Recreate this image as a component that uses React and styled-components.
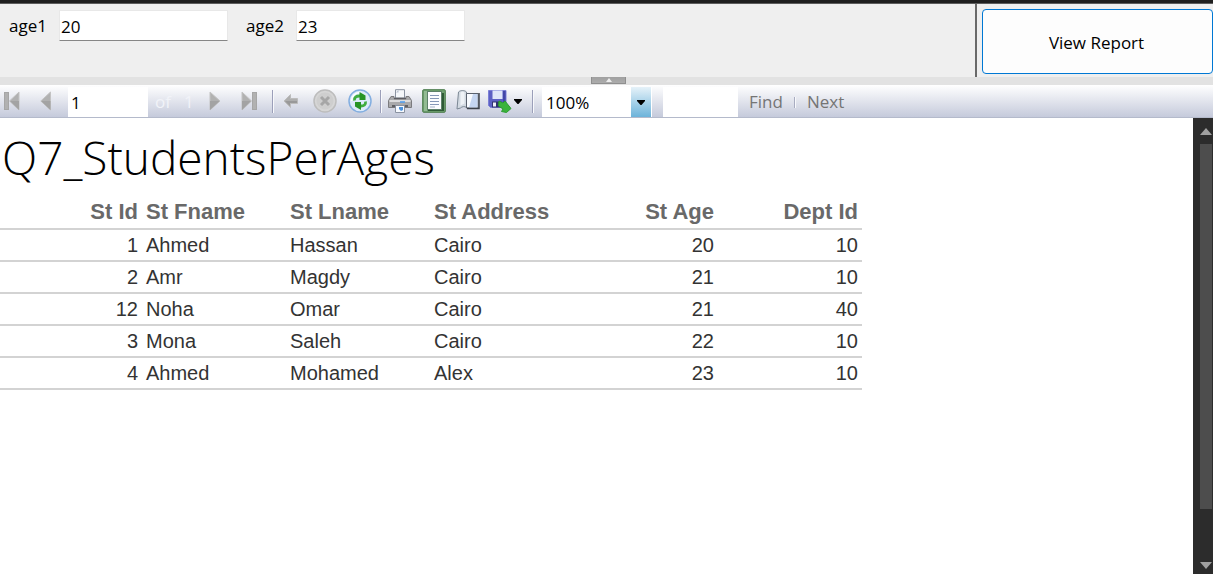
import React from "react";
import styled, { createGlobalStyle } from "styled-components";

const GlobalStyle = createGlobalStyle`
  *, *::before, *::after { box-sizing: border-box; }
  body { margin: 0; background: #fff; }
  button, input, select { font: inherit; color: inherit; margin: 0; border: 0; padding: 0; border-radius: 0; }
`;

const ui = `"Open Sans", "Noto Sans", sans-serif`;

const Viewer = styled.div`
  display: flex;
  flex-direction: column;
  min-height: 100vh;
  border-top: 3px solid #1f1f1f;
  font-family: ${ui};
  font-size: 17px;
  line-height: 24px;
  color: #000;
`;

const Parameters = styled.form`
  display: flex;
  height: 74px;
  border-top: 1px solid #5c5c5c;
  background: #efefef;
`;

const ParameterFields = styled.div`
  flex: 1;
  display: flex;
  align-items: flex-start;
  gap: 18px;
  padding: 6px 0 0 9px;
`;

const Field = styled.label`
  display: grid;
  grid-template-columns: 50px 169px;
  align-items: center;
`;

const FieldInput = styled.input`
  width: 100%;
  height: 31px;
  padding: 1px 1px 0;
  background: #fff;
  border: 1px solid #e8e8e8;
  border-bottom-color: #868686;
  border-radius: 1px;
`;

const SubmitArea = styled.div`
  display: flex;
  width: 238px;
  padding: 5px 0 3px 5px;
  border-left: 2px solid #696969;
`;

const SubmitButton = styled.button`
  flex: 1;
  padding: 2px 2px 0 0;
  background: #fdfdfd;
  border: 1px solid #0078d4;
  border-radius: 4px;
`;

const Splitter = styled.div`
  display: flex;
  justify-content: center;
  height: 8px;
  background: #e2e2e2;
`;

const Grip = styled.button`
  display: flex;
  justify-content: center;
  align-items: center;
  width: 35px;
  height: 7px;
  margin-left: 4px;
  background: linear-gradient(#a0a0a0, #acacac);
  border: 1px solid #8f8f8f;
  border-top: 0;
`;

const Toolbar = styled.div`
  display: flex;
  align-items: stretch;
  height: 33px;
  border-bottom: 1px solid #b4bacb;
  background: linear-gradient(#ffffff, #c5cadb);
`;

const ToolButton = styled.button`
  display: flex;
  flex: none;
  align-items: center;
  justify-content: center;
  width: ${(p) => p.$w}px;
  background: none;
`;

const MenuButton = styled(ToolButton)`
  justify-content: flex-start;
  gap: 2px;
  padding-left: 4px;
`;

const Separator = styled.span`
  flex: none;
  width: 8px;
  padding: 5px 2px 4px 4px;

  &::before {
    content: "";
    display: block;
    height: 100%;
    border-left: 1px solid #9b9fb9;
    border-right: 1px solid #f8f9fc;
  }
`;

const ToolInput = styled.input`
  flex: none;
  width: ${(p) => p.$w}px;
  margin-top: 2px;
  padding: 2px 3px 0;
  background: #fff;
`;

const PageCount = styled.span`
  display: flex;
  align-items: center;
  gap: 13px;
  width: 52px;
  padding: 2px 0 0 7px;
  color: #f1f3f8;
`;

const ZoomBox = styled.label`
  position: relative;
  flex: none;
  width: 110px;
  margin: 2px 11px 0 6px;
  border-right: 1px solid #fff;

  svg {
    position: absolute;
    right: 6px;
    top: 13px;
    pointer-events: none;
  }
`;

const ZoomSelect = styled.select`
  appearance: none;
  width: 100%;
  height: 100%;
  padding: 2px 24px 0 4px;
  background: linear-gradient(#e6f2f9, #6cb3da) right / 20px 100% no-repeat #fff;
`;

const FindLinks = styled.div`
  display: flex;
  align-items: center;
  gap: 11px;
  padding: 2px 0 0 11px;
`;

const FindLink = styled.a`
  color: #757575;
  text-decoration: none;
`;

const Tick = styled.span`
  width: 2px;
  height: 11px;
  border-left: 1px solid #a8acc0;
  border-right: 1px solid #f8f9fc;
`;

const ReportPane = styled.div`
  flex: 1;
  display: flex;
`;

const Report = styled.main`
  flex: 1;
  min-width: 0;
`;

const Title = styled.h1`
  margin: 0;
  padding: 7px 2px 0;
  font-size: 46px;
  font-weight: 300;
  line-height: 64px;
`;

const Table = styled.table`
  table-layout: fixed;
  width: 862px;
  margin-top: 7px;
  border-collapse: separate;
  border-spacing: 0;
  font-family: "Liberation Sans", Arial, sans-serif;
  font-size: 20px;
  line-height: 30px;
  color: #333;
`;

const Cell = styled.td`
  height: 32px;
  padding: 0 4px;
  border-bottom: 2px solid #d3d3d3;
  text-align: ${(p) => (p.$numeric ? "right" : "left")};
`;

const HeadCell = styled(Cell)`
  width: ${(p) => p.$w}px;
  height: 34px;
  font-size: 22px;
  font-weight: 700;
  color: #696969;
`;

const ScrollBar = styled.div`
  display: flex;
  flex-direction: column;
  align-items: flex-end;
  flex: none;
  width: 20px;
  padding: 10px 1px 5px 0;
  background: #2c2c2c;
`;

const ScrollTrack = styled.div`
  flex: 1;
  width: 12px;
  padding: 9px 0 53px;
`;

const ScrollThumb = styled.div`
  height: 100%;
  background: #4d4d4d;
`;

const Glyph = ({ w = 24, h = 24, children }) => (
  <svg width={w} height={h} viewBox={`0 0 ${w} ${h}`} aria-hidden="true">{children}</svg>
);

const Caret = () => (
  <Glyph w={8} h={5}><path d="M0 0h8v1L4.5 5h-1L0 1z" fill="#000" /></Glyph>
);

const ScrollArrow = ({ down }) => (
  <Glyph w={12} h={7}><path d={down ? "M0 0h12L6 7z" : "M0 7h12L6 0z"} fill="#a0a0a0" /></Glyph>
);

const FirstIcon = () => (
  <Glyph w={16} h={20}>
    <rect x="0.5" y="1.5" width="4" height="17" fill="#b1b1b1" stroke="#a6a6a6" />
    <path d="M15 1v18L5.5 10z" fill="#b1b1b1" stroke="#c3c3c3" />
    <path d="M15 10v9L6 10z" fill="#a3a3a3" />
  </Glyph>
);

const PrevIcon = () => (
  <Glyph w={12} h={20}>
    <path d="M10.5 1v18L.8 10z" fill="#b1b1b1" stroke="#c3c3c3" />
    <path d="M10.5 10v9L1 10z" fill="#a3a3a3" />
  </Glyph>
);

const NextIcon = () => (
  <Glyph w={12} h={20}>
    <path d="M1 1v18L11 10z" fill="#b1b1b1" stroke="#c3c3c3" />
    <path d="M1 10v9l9.5-9z" fill="#a3a3a3" />
  </Glyph>
);

const LastIcon = () => (
  <Glyph w={16} h={20}>
    <path d="M1 1v18l9.5-9z" fill="#b1b1b1" stroke="#c3c3c3" />
    <path d="M1 10v9l9-9z" fill="#a3a3a3" />
    <rect x="11.5" y="1.5" width="4" height="17" fill="#b1b1b1" stroke="#a6a6a6" />
  </Glyph>
);

const BackIcon = () => (
  <Glyph w={16} h={16}>
    <path d="M7.5 1.5v4h7v5h-7v4L1 8z" fill="#aeaeae" stroke="#bcbcbc" strokeLinejoin="round" />
    <path d="M2 8h12v2H7v3z" fill="#999" />
  </Glyph>
);

const StopIcon = () => (
  <Glyph>
    <circle cx="12" cy="12" r="11" fill="#d6d6d6" stroke="#bdbdbd" strokeWidth="1.5" />
    <circle cx="12" cy="12" r="8.5" fill="#cecece" />
    <path d="M8 8l8 8M16 8l-8 8" stroke="#a6a6a6" strokeWidth="3" />
  </Glyph>
);

const RefreshIcon = () => (
  <Glyph>
    <circle cx="12" cy="12" r="11" fill="#dcebfb" stroke="#83aee0" strokeWidth="1.5" />
    <path d="M3.5 12A8.500 8.500 0 0 1 12 3.500" fill="none" stroke="#fff" strokeWidth="1.5" />
    <path d="M6.5 11.500C6 8.500 8 6.800 12 7" fill="none" stroke="#3fae3f" strokeWidth="2.800" />
    <path d="M11.500 3l6 3.500v4.500h-6z" fill="#279427" />
    <path d="M17.500 12.500c.5 3-1.500 4.700-5 4.500" fill="none" stroke="#3fae3f" strokeWidth="2.800" />
    <path d="M13 21l-6-3.500V13h6z" fill="#279427" />
  </Glyph>
);

const PrintIcon = () => (
  <Glyph>
    <path d="M7.5 9V.7h9V9z" fill="#f5f7fa" stroke="#8b93a1" />
    <path d="M8 3.500h2.500V1z" fill="#b7bfcd" />
    <path d="M3 7.500h3v2h12v-2h3l2.500 4v7H.5v-7z" fill="#a9a9ab" stroke="#7b7b7e" />
    <path d="M1.500 12h21" stroke="#dcdcde" strokeWidth="2" />
    <path d="M6 9.500h12" stroke="#5d5d62" strokeWidth="1.500" />
    <path d="M12 13h5" stroke="#4d9cf0" strokeWidth="1.500" />
    <path d="M4 17h16" stroke="#606065" strokeWidth="2" />
    <path d="M7.500 16.500h9v7h-9z" fill="#f7faff" stroke="#8a92a1" />
    <path d="M11 18h4v3l-2 1-2-2z" fill="#4c92dc" />
  </Glyph>
);

const LayoutIcon = () => (
  <Glyph>
    <rect x=".7" y=".7" width="22.600" height="22.600" rx="1" fill="#6fa06f" stroke="#4b7b4b" />
    <path d="M2 2h3v20H2z" fill="#93bb93" />
    <path d="M19.500 4H22v18H6v-2h13.500z" fill="#2e5a35" />
    <rect x="5.500" y="2.500" width="14" height="18" fill="#fcfdff" stroke="#5d8069" />
    <path d="M8 6.500h9M8 9.500h9M8 12.500h9M8 15.500h9" stroke="#8698b8" />
    <path d="M8 18h5" stroke="#a6b2c7" />
  </Glyph>
);

const PageSetupIcon = () => (
  <Glyph>
    <path d="M2.500 3c2-2 6-2 8 0v15.500c-2-1.500-4.500-1-6 .5l-3.500 1z" fill="#d3dae2" stroke="#7b8794" />
    <path d="M4.500 3.500c1-1 3-1 4 0v11l-4 2z" fill="#eef2f6" />
    <path d="M10.500 4.500h11.500v14.500h-11.500z" fill="#f8fbff" stroke="#5a626e" />
    <path d="M17 5h4.500v13.500H13z" fill="#c5d6f2" />
    <path d="M11 19.500h12V4" fill="none" stroke="#3c424b" strokeWidth="1.500" />
  </Glyph>
);

const ExportIcon = () => (
  <Glyph>
    <path d="M.5 1.500h17.500v17h-15.500l-2-2z" fill="#5c60c4" stroke="#7c80d6" />
    <path d="M4.500 1.500h10V10h-10z" fill="#dfe6f9" />
    <path d="M15 2h2.500v15H15z" fill="#4347a8" />
    <path d="M4 12.500h9.500v6H4z" fill="#30336f" />
    <path d="M5 13.500h3v4H5z" fill="#eef0fa" />
    <path d="M11 12l4 2 2-2 6 7.500-4.500 4-5-1 1.500-2.500-4.500-3z" fill="#3bb33b" stroke="#2b9a31" />
  </Glyph>
);

const columns = [
  { name: "St Id", width: 142, numeric: true },
  { name: "St Fname", width: 144 },
  { name: "St Lname", width: 144 },
  { name: "St Address", width: 144 },
  { name: "St Age", width: 144, numeric: true },
  { name: "Dept Id", width: 144, numeric: true },
];

const students = [
  [1, "Ahmed", "Hassan", "Cairo", 20, 10],
  [2, "Amr", "Magdy", "Cairo", 21, 10],
  [12, "Noha", "Omar", "Cairo", 21, 40],
  [3, "Mona", "Saleh", "Cairo", 22, 10],
  [4, "Ahmed", "Mohamed", "Alex", 23, 10],
];

export default function App() {
  return (
    <Viewer>
      <GlobalStyle />
      <Parameters onSubmit={(e) => e.preventDefault()}>
        <ParameterFields>
          <Field>age1<FieldInput name="age1" defaultValue="20" /></Field>
          <Field>age2<FieldInput name="age2" defaultValue="23" /></Field>
        </ParameterFields>
        <SubmitArea>
          <SubmitButton type="submit">View Report</SubmitButton>
        </SubmitArea>
      </Parameters>
      <Splitter>
        <Grip type="button" aria-label="Hide parameters">
          <Glyph w={6} h={4}><path d="M0 4h6L3 0z" fill="#eee" /></Glyph>
        </Grip>
      </Splitter>
      <Toolbar role="toolbar">
        <ToolButton $w={24} aria-label="First page" disabled><FirstIcon /></ToolButton>
        <ToolButton $w={44} aria-label="Previous page" disabled><PrevIcon /></ToolButton>
        <ToolInput $w={80} aria-label="Current page" defaultValue="1" />
        <PageCount><span>of</span><span>1</span></PageCount>
        <ToolButton $w={30} aria-label="Next page" disabled><NextIcon /></ToolButton>
        <ToolButton $w={38} aria-label="Last page" disabled><LastIcon /></ToolButton>
        <Separator />
        <ToolButton $w={30} aria-label="Back to parent report" disabled><BackIcon /></ToolButton>
        <ToolButton $w={38} aria-label="Stop rendering" disabled><StopIcon /></ToolButton>
        <ToolButton $w={32} aria-label="Refresh"><RefreshIcon /></ToolButton>
        <Separator />
        <ToolButton $w={32} aria-label="Print"><PrintIcon /></ToolButton>
        <ToolButton $w={36} aria-label="Print layout"><LayoutIcon /></ToolButton>
        <ToolButton $w={32} aria-label="Page setup"><PageSetupIcon /></ToolButton>
        <MenuButton $w={44} aria-label="Export"><ExportIcon /><Caret /></MenuButton>
        <Separator />
        <ZoomBox>
          <ZoomSelect aria-label="Zoom" defaultValue="100%">
            <option>100%</option>
          </ZoomSelect>
          <Caret />
        </ZoomBox>
        <ToolInput $w={75} aria-label="Find text" />
        <FindLinks>
          <FindLink href="#find">Find</FindLink>
          <Tick />
          <FindLink href="#next">Next</FindLink>
        </FindLinks>
      </Toolbar>
      <ReportPane>
        <Report>
          <Title>Q7_StudentsPerAges</Title>
          <Table>
            <thead>
              <tr>
                {columns.map((c) => (
                  <HeadCell as="th" scope="col" key={c.name} $w={c.width} $numeric={c.numeric}>{c.name}</HeadCell>
                ))}
              </tr>
            </thead>
            <tbody>
              {students.map((row) => (
                <tr key={row[0]}>
                  {row.map((value, i) => (
                    <Cell key={columns[i].name} $numeric={columns[i].numeric}>{value}</Cell>
                  ))}
                </tr>
              ))}
            </tbody>
          </Table>
        </Report>
        <ScrollBar aria-hidden="true">
          <ScrollArrow />
          <ScrollTrack><ScrollThumb /></ScrollTrack>
          <ScrollArrow down />
        </ScrollBar>
      </ReportPane>
    </Viewer>
  );
}
